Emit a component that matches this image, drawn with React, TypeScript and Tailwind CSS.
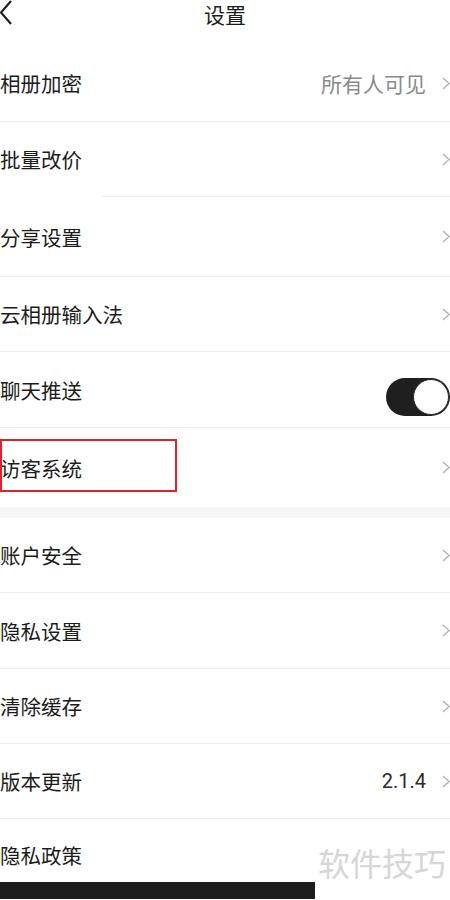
import type { ReactNode } from "react";

const FONT = "font-['Noto_Sans_CJK_SC','Noto_Sans',sans-serif]";

function Chevron() {
  return (
    <svg width="8" height="13" viewBox="0 0 8 13" className="shrink-0">
      <path d="M1 1 L7 6.5 L1 12" fill="none" stroke="#b0b0b0" strokeWidth="1.3" />
    </svg>
  );
}

function Toggle() {
  return (
    <div className="flex h-[38px] w-[64px] items-center justify-end rounded-full bg-[#1f1f1f] pr-[1px] self-start mt-[14px]">
      <div className="h-[36px] w-[36px] rounded-full border border-[#2a2a2a] bg-white" />
    </div>
  );
}

interface RowProps {
  label: string;
  height: string;
  right?: ReactNode;
  chevron?: boolean;
  line?: "full" | "inset" | "none";
  children?: ReactNode;
}

function Row({ label, height, right, chevron = true, line = "full", children }: RowProps) {
  return (
    <>
      <div className={`relative flex items-center justify-between ${height}`}>
        <span className="text-[20.5px] leading-[28px] text-[#1c1c1c]">{label}</span>
        <div className="flex items-center gap-[16px]">
          {right}
          {chevron && <Chevron />}
        </div>
        {children}
      </div>
      {line === "full" && <div className="h-px bg-[#ececec]" />}
      {line === "inset" && <div className="ml-[102px] h-px bg-[#ececec]" />}
    </>
  );
}

export default function App() {
  return (
    <div className={`relative h-[900px] w-[450px] overflow-hidden bg-white ${FONT}`}>
      {/* Header */}
      <header className="relative flex h-[45px] items-start justify-center">
        <svg width="14" height="26" viewBox="0 0 14 26" className="absolute left-0 top-0">
          <path d="M11 1 L1 12.5 L11 24" fill="none" stroke="#222" strokeWidth="2.2" />
        </svg>
        <h1 className="text-[21px] leading-[29px] text-[#1c1c1c]">设置</h1>
      </header>

      <Row
        label="相册加密"
        height="h-[76px]"
        right={<span className="text-[21px] leading-[28px] text-[#8a8a8a]">所有人可见</span>}
      />
      <Row label="批量改价" height="h-[74px]" line="inset" />
      <Row label="分享设置" height="h-[79px]" />
      <Row label="云相册输入法" height="h-[74px]" />
      <Row label="聊天推送" height="h-[75px]" chevron={false} right={<Toggle />} />
      <Row label="访客系统" height="h-[79px]" line="none">
        <div className="absolute left-0 top-[11px] h-[53px] w-[177px] border-2 border-[#d8262e]" />
      </Row>

      <div className="h-[11px] bg-[#f5f5f5]" />

      <Row label="账户安全" height="h-[74px]" />
      <Row label="隐私设置" height="h-[75px]" />
      <Row label="清除缓存" height="h-[74px]" />
      <Row
        label="版本更新"
        height="h-[74px]"
        right={<span className="font-['Roboto',sans-serif] text-[20px] leading-[28px] text-[#2a2a2a]">2.1.4</span>}
      />

      <div className="relative flex h-[63px] items-start pt-[22px]">
        <span className="text-[20.5px] leading-[28px] text-[#1c1c1c]">隐私政策</span>
        <span className="absolute right-[4px] top-[23px] text-[32px] leading-[40px] text-[#d6d6d6]">软件技巧</span>
      </div>

      <div className="h-[17px] w-[315px] bg-[#1d1d1d]" />
    </div>
  );
}
